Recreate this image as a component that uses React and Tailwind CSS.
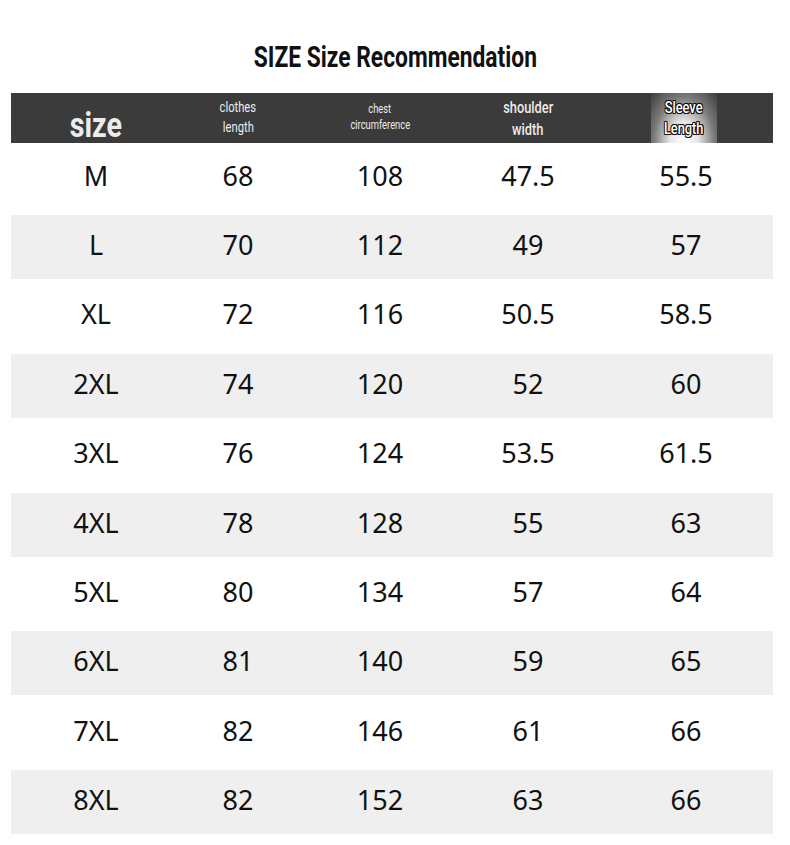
import React from 'react';

const ROWS = [
  ['M', '68', '108', '47.5', '55.5'],
  ['L', '70', '112', '49', '57'],
  ['XL', '72', '116', '50.5', '58.5'],
  ['2XL', '74', '120', '52', '60'],
  ['3XL', '76', '124', '53.5', '61.5'],
  ['4XL', '78', '128', '55', '63'],
  ['5XL', '80', '134', '57', '64'],
  ['6XL', '81', '140', '59', '65'],
  ['7XL', '82', '146', '61', '66'],
  ['8XL', '82', '152', '63', '66'],
];

const narrow = { fontFamily: 'Roboto, "Liberation Sans", sans-serif' };
const outline = {
  textShadow:
    '1px 0 0 #111, -1px 0 0 #111, 0 1px 0 #111, 0 -1px 0 #111, 1px 1px 0 #111, -1px -1px 0 #111, 1px -1px 0 #111, -1px 1px 0 #111',
};

export default function App() {
  return (
    <div className="w-[790px] h-[845px] bg-white overflow-hidden">
      <div className="pt-[38px] h-[93px] flex justify-center">
        <h1 className="inline-block scale-x-[0.76] text-[30px] font-bold text-[#111] leading-[38px] whitespace-nowrap" style={narrow}>
          SIZE Size Recommendation
        </h1>
      </div>

      <div className="mx-[11px] w-[762px]">
        {/* header bar */}
        <div className="h-[50px] bg-[#3b3b3b] grid grid-cols-[170px_114px_170px_126px_182px] text-[#ececec]" style={narrow}>
          <div className="flex items-end justify-center">
            <span className="inline-block scale-x-[0.82] text-[35px] font-bold leading-[38px] -mb-[2px]">size</span>
          </div>
          <div className="flex flex-col items-center justify-center text-[14px] leading-[20px] pb-[2px]">
            <span className="inline-block scale-x-[0.8]">clothes</span>
            <span className="inline-block scale-x-[0.8]">length</span>
          </div>
          <div className="flex flex-col items-center justify-center text-[12px] leading-[16px] pb-[2px]">
            <span className="inline-block scale-x-[0.78]">chest</span>
            <span className="inline-block scale-x-[0.78]">circumference</span>
          </div>
          <div className="flex flex-col items-center justify-center text-[16px] font-medium leading-[22px] pt-[2px]">
            <span className="inline-block scale-x-[0.8]">shoulder</span>
            <span className="inline-block scale-x-[0.8]">width</span>
          </div>
          <div className="flex justify-center pl-[4px]">
            <div className="relative w-[50px] flex flex-col items-center justify-center">
              <div className="absolute inset-x-[-8px] inset-y-0 bg-[radial-gradient(ellipse_at_50%_100%,#ffffff_0%,#e6e6e6_30%,#7a7a7a_65%,#3b3b3b_100%)]" />
              <span className="relative inline-block scale-x-[0.8] text-[16px] font-medium leading-[21px] text-white" style={outline}>
                Sleeve
              </span>
              <span className="relative inline-block scale-x-[0.8] text-[16px] font-medium leading-[21px] text-white" style={outline}>
                Length
              </span>
            </div>
          </div>
        </div>

        {/* rows */}
        {ROWS.map((row, i) => (
          <div key={row[0]} className="h-[69.4px] flex items-center">
            <div
              className={
                'w-full h-[64px] grid grid-cols-[170px_114px_170px_126px_182px] items-center text-[27px] text-[#111] pb-[5px] ' +
                (i % 2 === 1 ? 'bg-[#efefef]' : '')
              }
              style={{ fontFamily: '"Noto Sans", "Open Sans", sans-serif' }}
            >
              {row.map((cell, j) => (
                <div key={j} className={'text-center leading-none ' + (j === 4 ? 'pl-[8px]' : '')}>
                  {cell}
                </div>
              ))}
            </div>
          </div>
        ))}
      </div>
    </div>
  );
}
